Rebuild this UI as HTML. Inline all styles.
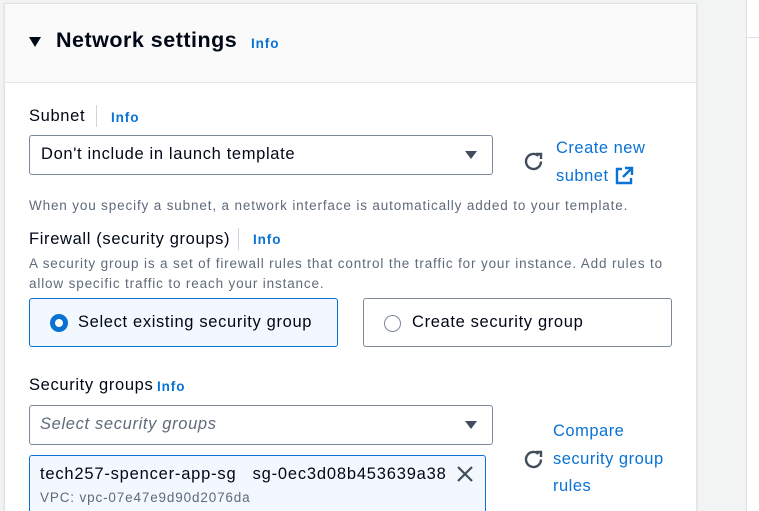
<!DOCTYPE html>
<html><head><meta charset="utf-8"><style>
*{margin:0;padding:0;box-sizing:border-box}
html,body{width:759px;height:511px;overflow:hidden}
body{background:#f2f3f3;font-family:"Liberation Sans",sans-serif;color:#000716;position:relative}
.a{position:absolute;white-space:nowrap}
.panel{position:absolute;left:4px;top:3px;width:693px;height:520px;background:#fff;border:1px solid #e0e2e4;box-shadow:0 1px 2px rgba(0,0,0,.1)}
.hdr{position:absolute;left:4px;top:3px;width:693px;height:80px;background:#fafafa;border:1px solid #e0e2e4;border-bottom:1px solid #e5e7e9}
.info{color:#0972d3;font-weight:bold;font-size:13.5px;letter-spacing:0.9px}
.lbl{font-size:16.5px;letter-spacing:0.65px}
.help{font-size:13.5px;color:#5f6b7a;letter-spacing:0.85px}
.box{position:absolute;border:1px solid #7d8998;border-radius:3px;background:#fff}
.sel{position:absolute;border:1px solid #0972d3;border-radius:3px;background:#f2f8fd}
.link{color:#0972d3;font-size:16.5px;letter-spacing:0.5px}
.caret{position:absolute;width:0;height:0;border-left:6.5px solid transparent;border-right:6.5px solid transparent;border-top:8px solid #414d5c}
</style></head><body>
<div style="position:absolute;left:746px;top:0;width:1px;height:511px;background:#e0e2e4"></div>
<div style="position:absolute;left:747px;top:0;width:12px;height:511px;background:#fff"></div>
<div style="position:absolute;left:747px;top:37px;width:12px;height:1px;background:#e0e2e4"></div>
<div class="panel"></div>
<div class="hdr"></div>
<div class="caret" style="left:29px;top:37px;border-top-width:10px;border-left-width:6px;border-right-width:6px;border-top-color:#000716"></div>
<div class="a" style="left:56px;top:28px;font-size:21.5px;font-weight:bold;letter-spacing:0.5px">Network settings</div>
<div class="a info" style="left:251px;top:36px">Info</div>

<div class="a lbl" style="left:29px;top:107px">Subnet</div>
<div style="position:absolute;left:96px;top:105px;width:1px;height:22px;background:#d1d5db"></div>
<div class="a info" style="left:111px;top:110px">Info</div>
<div class="box" style="left:29px;top:135px;width:464px;height:40px"></div>
<div class="a lbl" style="left:41px;top:145px">Don't include in launch template</div>
<div class="caret" style="left:465px;top:151px"></div>
<svg class="a" style="left:522px;top:150px" width="24" height="24" viewBox="0 0 24 24"><path d="M19 11.5a7.5 7.5 0 1 1-2.5-5.6" fill="none" stroke="#414d5c" stroke-width="2.4"/><path d="M14 4h5v5" fill="none" stroke="#414d5c" stroke-width="2.4"/></svg>
<div class="a link" style="left:556px;top:139px">Create new</div>
<div class="a link" style="left:556px;top:167px">subnet</div>
<svg class="a" style="left:614px;top:166px" width="20" height="20" viewBox="0 0 20 20"><path d="M8 3H3v14h14v-5" fill="none" stroke="#0972d3" stroke-width="2.4"/><path d="M11 2h7v7M18 2l-9 9" fill="none" stroke="#0972d3" stroke-width="2.4"/></svg>
<div class="a help" style="left:29px;top:198px">When you specify a subnet, a network interface is automatically added to your template.</div>

<div class="a lbl" style="left:29px;top:230px">Firewall (security groups)</div>
<div style="position:absolute;left:238px;top:228px;width:1px;height:22px;background:#d1d5db"></div>
<div class="a info" style="left:253px;top:232px">Info</div>
<div class="a help" style="left:29px;top:256px">A security group is a set of firewall rules that control the traffic for your instance. Add rules to</div>
<div class="a help" style="left:29px;top:276px">allow specific traffic to reach your instance.</div>

<div class="sel" style="left:29px;top:298px;width:309px;height:49px"></div>
<div style="position:absolute;left:50px;top:314px;width:18px;height:18px;border-radius:50%;border:5px solid #0972d3;background:#fff"></div>
<div class="a lbl" style="left:78px;top:313px">Select existing security group</div>
<div class="box" style="left:363px;top:298px;width:309px;height:49px"></div>
<div style="position:absolute;left:384px;top:315px;width:17px;height:17px;border-radius:50%;border:1.5px solid #7d8998;background:#fff"></div>
<div class="a lbl" style="left:412px;top:313px">Create security group</div>

<div class="a lbl" style="left:29px;top:376px">Security groups</div>
<div class="a info" style="left:157px;top:379px">Info</div>
<div class="box" style="left:29px;top:405px;width:464px;height:40px"></div>
<div class="a lbl" style="left:40px;top:415px;font-style:italic;color:#5f6b7a">Select security groups</div>
<div class="caret" style="left:465px;top:421px"></div>
<div class="sel" style="left:29px;top:455px;width:457px;height:70px"></div>
<div class="a lbl" style="left:40px;top:465px;letter-spacing:0.8px">tech257-spencer-app-sg&nbsp;&nbsp; sg-0ec3d08b453639a38</div>
<svg class="a" style="left:456px;top:465px" width="18" height="18" viewBox="0 0 18 18"><path d="M2 2l14 14M16 2L2 16" stroke="#414d5c" stroke-width="2.2"/></svg>
<div class="a help" style="left:40px;top:490px">VPC: vpc-07e47e9d90d2076da</div>
<svg class="a" style="left:522px;top:448px" width="24" height="24" viewBox="0 0 24 24"><path d="M19 11.5a7.5 7.5 0 1 1-2.5-5.6" fill="none" stroke="#414d5c" stroke-width="2.4"/><path d="M14 4h5v5" fill="none" stroke="#414d5c" stroke-width="2.4"/></svg>
<div class="a link" style="left:553px;top:422px">Compare</div>
<div class="a link" style="left:553px;top:450px">security group</div>
<div class="a link" style="left:553px;top:477px">rules</div>
</body></html>
